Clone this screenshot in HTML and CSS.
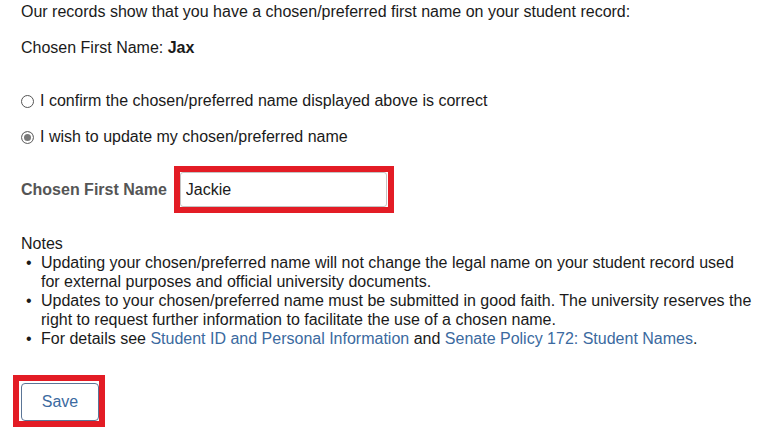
FILE: index.html
```html
<!DOCTYPE html>
<html lang="en">
<head>
    <meta charset="UTF-8">
    <meta name="viewport" content="width=device-width, initial-scale=1.0">
    <title>Chosen Name</title>
    <link rel="stylesheet" href="styles.css">
</head>
<body>
    <div class="page">
        <p class="intro">Our records show that you have a chosen/preferred first name on your student record:</p>
        <p class="current">Chosen First Name: <strong>Jax</strong></p>

        <div class="choices">
            <label class="choice"><input type="radio" name="nameChoice" value="confirm"> I confirm the chosen/preferred name displayed above is correct</label>
            <label class="choice"><input type="radio" name="nameChoice" value="update" checked> I wish to update my chosen/preferred name</label>
        </div>

        <div class="field-row">
            <label class="field-label" for="chosenFirst">Chosen First Name</label>
            <div class="highlight field-highlight">
                <input type="text" id="chosenFirst" class="text-input" value="Jackie">
            </div>
        </div>

        <div class="notes">
            <div class="notes-title">Notes</div>
            <ul class="notes-list">
                <li>Updating your chosen/preferred name will not change the legal name on your student record used for external purposes and official university documents.</li>
                <li>Updates to your chosen/preferred name must be submitted in good faith. The university reserves the right to request further information to facilitate the use of a chosen name.</li>
                <li>For details see <a href="#">Student ID and Personal Information</a> and <a href="#">Senate Policy 172: Student Names</a>.</li>
            </ul>
        </div>

        <div class="highlight save-highlight">
            <button class="save-btn" type="button">Save</button>
        </div>
    </div>
</body>
</html>
```

FILE: styles.css
```css
:root {
    --text-color: #1a1a1a;
    --label-color: #555555;
    --link-color: #3b6aa0;
    --highlight-color: #e31c25;
    --input-border: #c4c4c4;
}
* { margin: 0; padding: 0; box-sizing: border-box; }
body { font-family: Arial, "Liberation Sans", sans-serif; font-size: 16px; color: var(--text-color); background: #ffffff; }
.page { padding: 3px 0 0 21px; width: 779px; }
.intro, .current { line-height: 18px; }
.current { margin-top: 18px; }
.current strong { font-weight: bold; }
.choices { display: flex; flex-direction: column; gap: 18px; margin-top: 35px; }
.choice { display: flex; align-items: center; gap: 6px; line-height: 18px; }
.choice input { appearance: none; -webkit-appearance: none; width: 13px; height: 13px; border: 1px solid #555; border-radius: 50%; background: #fff; margin: 0; }
.choice input:checked { border-color: #6f6f6f; background: #7a7a7a; box-shadow: inset 0 0 0 2px #fff; }
.field-row { display: flex; align-items: center; gap: 7px; margin-top: 20px; }
.field-label { font-weight: bold; color: var(--label-color); line-height: 18px; }
.highlight { border: 6px solid var(--highlight-color); }
.field-highlight { padding: 0 1px 0 0; }
.text-input { display: block; width: 207px; height: 35px; border: 1px solid var(--input-border); border-radius: 3px; padding: 0 5px; font-family: inherit; font-size: 16px; color: var(--text-color); outline: none; }
.notes { margin-top: 21px; line-height: 19px; }
.notes-list { list-style: none; padding-left: 20px; margin-right: 26px; }
.notes-list li { position: relative; }
.notes-list li::before { content: "\2022"; position: absolute; left: -15px; }
.notes-list a { color: var(--link-color); text-decoration: none; }
.save-highlight { display: inline-block; margin: 27px 0 0 -8px; padding: 2px 0 0 2px; }
.save-btn { display: block; width: 78px; height: 38px; background: #fff; border: 1px solid #5b7596; border-radius: 4px; color: var(--link-color); font-family: inherit; font-size: 16px; cursor: pointer; }
```
